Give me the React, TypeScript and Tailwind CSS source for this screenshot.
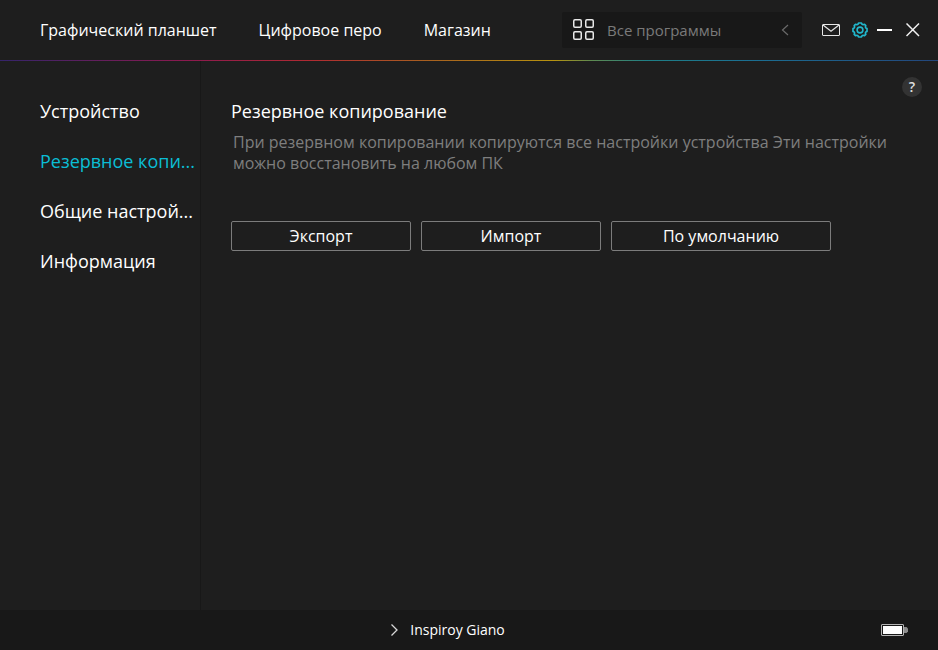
import { useState } from "react";

const tabs = ["Графический планшет", "Цифровое перо", "Магазин"];
const sections = [
  { label: "Устройство", title: "Устройство" },
  { label: "Резервное копи...", title: "Резервное копирование" },
  { label: "Общие настрой...", title: "Общие настройки" },
  { label: "Информация", title: "Информация" },
];

function MailIcon() {
  return (
    <svg width="18" height="12" viewBox="0 0 18 12" fill="none" stroke="#e6e6e6" aria-hidden="true">
      <rect x="0.5" y="0.5" width="17" height="11" rx="0.5" />
      <path d="M1 1l8 6.300 8-6.300" strokeWidth="1.200" />
    </svg>
  );
}

function GearIcon() {
  return (
    <svg width="16" height="16" viewBox="0 0 16 16" fill="none" stroke="#21b8cd" strokeWidth="1.700" strokeLinejoin="round" aria-hidden="true">
      <path d="M6.500 1h3l.6 1.300 1 .4 1.400-.4 1.300 1.300-.4 1.400.4 1 1.200.5v3l-1.200.5-.4 1 .4 1.400-1.300 1.300-1.400-.4-1 .4-.6 1.300h-3l-.6-1.300-1-.4-1.400.4-1.300-1.300.4-1.400-.4-1L1 9.500v-3L2.200 6l.4-1-.4-1.400 1.300-1.300 1.400.4 1-.4z" />
      <circle cx="8" cy="8" r="2.900" strokeWidth="1.600" />
    </svg>
  );
}

function BatteryIcon() {
  return (
    <svg width="27" height="12" viewBox="0 0 27 12" aria-hidden="true">
      <rect x="0.5" y="0.5" width="22" height="11" rx="0.5" fill="none" stroke="#b5b5b5" />
      <rect x="2" y="2" width="19" height="8" fill="#fff" />
      <path d="M23 3h2.500l1.500 1.500v3L25.500 9H23z" fill="#8c8c8c" />
    </svg>
  );
}

export default function App() {
  const [active, setActive] = useState(1);

  return (
    <div className="flex min-h-screen flex-col bg-[#1e1e1e] font-['Open_Sans','Noto_Sans',sans-serif] text-white">
      <header className="flex h-15 shrink-0 items-center pr-[18px] pl-10">
        <nav className="flex gap-[42px] text-base whitespace-nowrap">
          {tabs.map((tab) => (
            <a key={tab} href="#">{tab}</a>
          ))}
        </nav>
        <button type="button" className="ml-auto flex h-9 w-60 items-center rounded-xs bg-[#181818] pr-[13px] pl-[11px] text-[#7a7a7a]">
          <svg width="22" height="22" viewBox="0 0 22 22" fill="none" stroke="#e8e8e8" strokeWidth="1.5" aria-hidden="true">
            <rect x="0.75" y="0.75" width="7.500" height="7.500" rx="1.200" />
            <rect x="12.750" y="0.75" width="7.500" height="7.500" rx="1.200" />
            <rect x="0.75" y="12.750" width="7.500" height="7.500" rx="1.200" />
            <rect x="12.750" y="12.750" width="7.500" height="7.500" rx="1.200" />
          </svg>
          <span className="ml-3 text-[15px]">Все программы</span>
          <svg className="ml-auto" width="8" height="12" viewBox="0 0 8 12" fill="none" stroke="#6a6a6a" strokeWidth="1.200" aria-hidden="true">
            <path d="M7 1L1.500 6 7 11" />
          </svg>
        </button>
        <div className="ml-5 flex items-center">
          <button type="button" aria-label="Сообщения"><MailIcon /></button>
          <button type="button" aria-label="Настройки" className="ml-3"><GearIcon /></button>
          <button type="button" aria-label="Свернуть" className="ml-[9px] flex h-4 w-[15px] items-center">
            <span className="h-0.5 w-full bg-white" />
          </button>
          <button type="button" aria-label="Закрыть" className="ml-[14px]">
            <svg width="14" height="14" viewBox="0 0 14 14" stroke="#f0f0f0" strokeWidth="1.500" aria-hidden="true">
              <path d="M0.500.5l12.500 12.500M13 .5L.5 13" />
            </svg>
          </button>
        </div>
      </header>
      <div className="h-px shrink-0 bg-[linear-gradient(to_right,#35246b_0%,#8c1a4f_20%,#b02a32_33%,#a8621f_46%,#b8930f_59%,#5f8a50_63%,#1f7f86_69%,#1b6f92_80%,#23467c_100%)]" />
      <div className="flex grow">
        <aside className="w-[201px] shrink-0 border-r border-[#181818] pt-[25px] pl-10">
          <nav className="flex flex-col text-lg whitespace-nowrap">
            {sections.map((section, i) => (
              <a
                key={section.title}
                href="#"
                title={section.title}
                onClick={() => setActive(i)}
                className={`h-[50px] leading-[50px] ${active === i ? "text-[#0bbdd4]" : ""}`}
              >
                {section.label}
              </a>
            ))}
          </nav>
        </aside>
        <main className="flex grow flex-col pr-4 pl-[30px]">
          <button type="button" aria-label="Справка" className="mt-4 flex size-5 items-center justify-center self-end rounded-full bg-[#333] text-sm font-semibold text-[#e0e0e0]">
            ?
          </button>
          <h1 className="text-lg leading-7">Резервное копирование</h1>
          <p className="mt-[7px] max-w-[680px] pl-0.5 text-base leading-[21px] text-[#7e7e7e]">
            При резервном копировании копируются все настройки устройства Эти настройки можно восстановить на любом ПК
          </p>
          <div className="mt-[47px] flex gap-2.5 text-base">
            <button type="button" className="h-[30px] w-[180px] rounded-xs border border-[#7c7c7c]">Экспорт</button>
            <button type="button" className="h-[30px] w-[180px] rounded-xs border border-[#7c7c7c]">Импорт</button>
            <button type="button" className="h-[30px] w-[220px] rounded-xs border border-[#7c7c7c]">По умолчанию</button>
          </div>
        </main>
      </div>
      <footer className="grid h-10 shrink-0 grid-cols-[1fr_auto_1fr] items-center bg-[#181818] pr-[30px]">
        <button type="button" className="col-start-2 flex items-center gap-3 pr-3 text-sm">
          <svg width="7" height="12" viewBox="0 0 7 12" fill="none" stroke="#d8d8d8" strokeWidth="1.300" aria-hidden="true">
            <path d="M0.500.5L6 6 .5 11.500" />
          </svg>
          Inspiroy Giano
        </button>
        <div className="justify-self-end"><BatteryIcon /></div>
      </footer>
    </div>
  );
}
